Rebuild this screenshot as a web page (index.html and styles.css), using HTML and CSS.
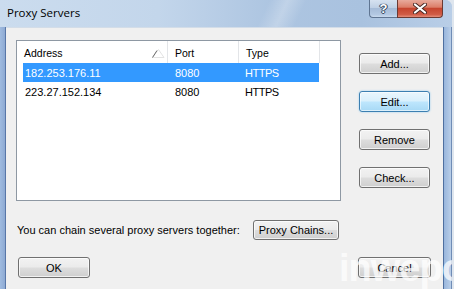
FILE: index.html
```html
<!DOCTYPE html>
<html>
<head>
<meta charset="utf-8">
<link rel="stylesheet" href="styles.css">
</head>
<body>
<div class="window">
  <div class="titlebar">
    <span class="title">Proxy Servers</span>
    <div class="caption">
      <div class="cap help">?</div>
      <div class="cap close">
        <svg width="14" height="11" viewBox="0 0 14 11">
          <path d="M2 1.5 L12 9.5 M12 1.5 L2 9.5" stroke="#4a2a26" stroke-width="4" stroke-linecap="round"/>
          <path d="M2 1.5 L12 9.5 M12 1.5 L2 9.5" stroke="#ffffff" stroke-width="2.2" stroke-linecap="round"/>
        </svg>
      </div>
    </div>
  </div>
  <div class="frame-body">
    <div class="frame-l"></div>
    <div class="client">
      <div class="main-row">
        <div class="listview">
          <div class="lv-header">
            <div class="hcol h-addr">Address
              <svg class="sort" width="14" height="11" viewBox="0 0 14 11">
                <path d="M1.5 9.5 L7.5 1.5 L13 9.5 Z" fill="none" stroke="#e3e3e3" stroke-width="1"/>
                <path d="M1.5 9.5 L6 2.5" stroke="#6a6a6a" stroke-width="1"/>
              </svg>
            </div>
            <div class="hcol h-port">Port</div>
            <div class="hcol h-type">Type</div>
            <div class="hcol h-fill"></div>
          </div>
          <div class="lv-row selected">
            <div class="cell c-addr">182.253.176.11</div>
            <div class="cell c-port">8080</div>
            <div class="cell c-type">HTTPS</div>
          </div>
          <div class="lv-row">
            <div class="cell c-addr">223.27.152.134</div>
            <div class="cell c-port">8080</div>
            <div class="cell c-type">HTTPS</div>
          </div>
        </div>
        <div class="side-btns">
          <div class="btn">Add...</div>
          <div class="btn default">Edit...</div>
          <div class="btn">Remove</div>
          <div class="btn">Check...</div>
        </div>
      </div>
      <div class="chain-row">
        <span class="chain-text">You can chain several proxy servers together:</span>
        <div class="btn chain-btn">Proxy Chains...</div>
      </div>
      <div class="bottom-row">
        <div class="btn ok-btn">OK</div>
        <div class="btn cancel-btn">Cancel</div>
      </div>
    </div>
    <div class="frame-r"></div>
  </div>
  <div class="watermark">inwepo</div>
</div>
</body>
</html>
```

FILE: styles.css
```css
* { box-sizing: border-box; }
html, body { margin: 0; padding: 0; }
body {
  width: 454px;
  height: 289px;
  overflow: hidden;
  background: #dfe6ee;
  font-family: "Liberation Sans", Arial, sans-serif;
  font-size: 11px;
  color: #000;
}
.window {
  position: relative;
  width: 452px;
  height: 289px;
  display: flex;
  flex-direction: column;
  border-top-right-radius: 7px;
  overflow: hidden;
  background: #b7cce6;
}
.titlebar {
  height: 27px;
  flex: none;
  display: flex;
  align-items: flex-start;
  background:
    linear-gradient(115deg, rgba(255,255,255,0) 0%, rgba(255,255,255,0) 58%, rgba(255,255,255,0.25) 62%, rgba(255,255,255,0) 66%, rgba(255,255,255,0) 100%),
    linear-gradient(to right, #cbdcee 0%, #c3d6eb 35%, #adc5e1 60%, #a9c2df 80%, #b9cee7 100%);
}
.title {
  font-family: "Open Sans", "Liberation Sans", sans-serif;
  font-size: 11.5px;
  line-height: 14px;
  padding: 6px 0 0 7px;
  color: #000;
}
.caption {
  margin-left: auto;
  margin-right: 9px;
  display: flex;
}
.cap {
  height: 18px;
  display: flex;
  align-items: center;
  justify-content: center;
  border: 1px solid #5f7592;
  border-top: none;
}
.help {
  width: 28px;
  border-right: none;
  border-bottom-left-radius: 4px;
  background: linear-gradient(#d6e2f0 0%, #bfd0e5 45%, #a6bcd8 50%, #b3c8e2 85%, #c9daee 100%);
  color: #fff;
  font-weight: bold;
  font-size: 13px;
  text-shadow: 0 0 1px #2c3e57, 0 0 1px #2c3e57, 1px 0 0 #3b4f6b, -1px 0 0 #3b4f6b, 0 1px 0 #3b4f6b;
}
.close {
  width: 46px;
  border-bottom-right-radius: 4px;
  border-color: #6b3a33;
  background: linear-gradient(#e8aa9c 0%, #dc7e69 42%, #c6452f 50%, #d05c46 85%, #e58e7b 100%);
}
.frame-body {
  flex: 1;
  display: flex;
  min-height: 0;
}
.frame-l {
  width: 6px;
  flex: none;
  background: linear-gradient(to right, #9fbbe0, #8eaad3);
  border-right: 1px solid #5877a8;
}
.frame-r {
  width: 9px;
  flex: none;
  background: linear-gradient(to right, #99b6dc, #b9cee8);
  border-left: 1px solid #4f6f9f;
  border-right: 1px solid #6f8cb6;
}
.client {
  width: 437px;
  flex: none;
  background: #f0f0f0;
  border-top: 1px solid #d3dde8;
  padding: 12px 0 0 10px;
  display: flex;
  flex-direction: column;
}
.main-row {
  display: flex;
  gap: 18px;
}
.listview {
  width: 325px;
  height: 161px;
  background: #fff;
  border: 1px solid #8e98a3;
  flex: none;
}
.lv-header {
  display: flex;
  height: 22px;
}
.hcol {
  height: 22px;
  line-height: 21px;
  font-size: 10.5px;
  padding-left: 7px;
  padding-top: 2px;
  border-right: 1px solid #e3e5e8;
  position: relative;
}
.h-addr { width: 151px; }
.h-port { width: 71px; }
.h-type { width: 81px; }
.h-fill { flex: 1; border-right: none; }
.sort {
  position: absolute;
  left: 134px;
  top: 7px;
}
.lv-row {
  display: flex;
  height: 19px;
  line-height: 19px;
  margin-left: 6px;
  width: 296px;
  padding-top: 1px;
}
.lv-row.selected {
  background: #3399ff;
  color: #fff;
}
.cell { white-space: nowrap; }
.c-addr { width: 145px; padding-left: 2px; }
.c-port { width: 71px; padding-left: 7px; }
.c-type { width: 80px; padding-left: 6px; letter-spacing: -0.5px; }
.side-btns {
  margin-top: 13px;
  display: flex;
  flex-direction: column;
  gap: 17px;
}
.btn {
  height: 21px;
  display: flex;
  align-items: center;
  justify-content: center;
  border: 1px solid #707070;
  border-radius: 3px;
  background: linear-gradient(#f2f2f2 0%, #ebebeb 48%, #dddddd 52%, #cfcfcf 100%);
  box-shadow: inset 0 0 0 1px rgba(255,255,255,0.7);
  white-space: nowrap;
}
.side-btns .btn { width: 71px; }
.btn.default {
  border-color: #3c7fb1;
  background: linear-gradient(#eaf6fd 0%, #d9f0fc 48%, #bee6fd 52%, #a7d9f5 100%);
  box-shadow: inset 0 0 0 1px rgba(255,255,255,0.6), 0 0 2px #8cc9ef;
}
.chain-row {
  margin-top: 19px;
  width: 323px;
  display: flex;
  align-items: center;
  justify-content: space-between;
}
.chain-text { padding-left: 1px; }
.chain-btn {
  width: 86px;
  height: 20px;
}
.bottom-row {
  margin-top: 17px;
  width: 415px;
  padding-left: 2px;
  display: flex;
  justify-content: space-between;
}
.ok-btn { width: 72px; }
.cancel-btn { width: 73px; }
.watermark {
  position: absolute;
  left: 339px;
  top: 249px;
  font-family: "Liberation Sans", Arial, sans-serif;
  font-weight: bold;
  font-size: 38px;
  line-height: 38px;
  color: rgba(255, 255, 255, 0.72);
  letter-spacing: -1px;
  white-space: nowrap;
  pointer-events: none;
}
```
